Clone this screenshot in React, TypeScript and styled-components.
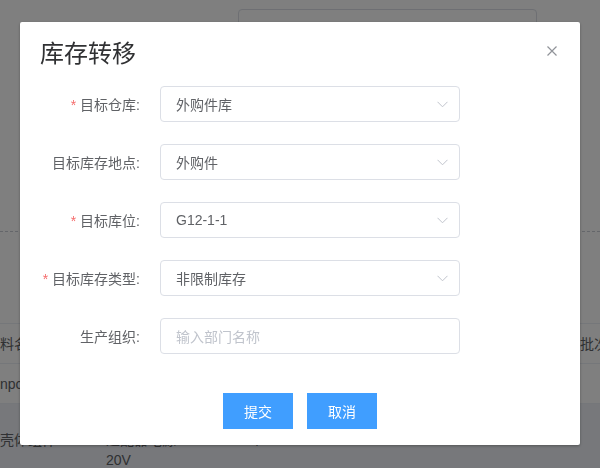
import styled, { createGlobalStyle } from 'styled-components';

const GlobalStyle = createGlobalStyle`
  html, body {
    margin: 0;
    padding: 0;
  }
  body {
    font-family: "Liberation Sans", "Noto Sans CJK SC", sans-serif;
    font-size: 14px;
    color: #606266;
  }
`;

// 背景页面
const Page = styled.div`
  position: relative;
  width: 600px;
  height: 468px;
  overflow: hidden;
  background: #ffffff;
`;

const FilterBar = styled.div`
  height: 232px;
  box-sizing: border-box;
  padding-top: 9px;
  border-bottom: 1px dashed #c8ccd4;
`;

const FilterRow = styled.div`
  display: flex;
  align-items: center;
  gap: 12px;
  padding-left: 170px;
`;

const FilterLabel = styled.label`
  width: 56px;
  text-align: right;
  font-size: 14px;
  color: #606266;
`;

const FilterInput = styled.div`
  width: 299px;
  height: 40px;
  box-sizing: border-box;
  border: 1px solid #dcdfe6;
  border-radius: 4px;
  padding-left: 15px;
  display: flex;
  align-items: center;
  color: #c0c4cc;
`;

const Table = styled.div`
  margin-top: 91px;
  border-top: 1px solid #ebeef5;
`;

const TableRow = styled.div<{ $tall?: boolean; $shade?: boolean }>`
  display: grid;
  grid-template-columns: 100px 150px 110px 110px 110px 1fr;
  height: ${p => (p.$tall ? 'auto' : '39px')};
  padding: ${p => (p.$tall ? '26px 0 0' : '0')};
  align-items: ${p => (p.$tall ? 'start' : 'center')};
  border-bottom: 1px solid #ebeef5;
  background: ${p => (p.$shade ? '#eef1f6' : '#ffffff')};
  color: #606266;
`;

const Cell = styled.div<{ $pad?: number }>`
  padding-left: ${p => p.$pad ?? 0}px;
  line-height: 20px;
  white-space: nowrap;
`;

// 弹窗
const Overlay = styled.div`
  position: fixed;
  inset: 0;
  background: rgba(0, 0, 0, 0.5);
  display: flex;
  justify-content: center;
  align-items: flex-start;
  padding-top: 22px;
`;

const Dialog = styled.div`
  width: 560px;
  background: #ffffff;
  border-radius: 2px;
  box-shadow: 0 1px 3px rgba(0, 0, 0, 0.3);
  font-family: "Liberation Sans", "Noto Sans CJK SC", sans-serif;
`;

const Header = styled.div`
  display: flex;
  justify-content: space-between;
  align-items: flex-start;
  padding: 20px 20px 0;
`;

const Title = styled.span`
  font-size: 24px;
  line-height: 24px;
  color: #303133;
`;

const CloseButton = styled.button`
  margin: 4px 3px 0 0;
  padding: 0;
  border: none;
  background: none;
  width: 10px;
  height: 10px;
  display: flex;
  cursor: pointer;
`;

const Body = styled.div`
  padding: 20px 20px 39px;
  display: flex;
  flex-direction: column;
  gap: 22px;
`;

const FormItem = styled.div`
  display: grid;
  grid-template-columns: 100px 300px;
  column-gap: 20px;
  align-items: center;
`;

const Label = styled.label`
  text-align: right;
  font-size: 14px;
  color: #606266;
  white-space: nowrap;
`;

const Star = styled.span`
  color: #f56c6c;
  margin-right: 4px;
`;

const Field = styled.div<{ $placeholder?: boolean }>`
  height: 36px;
  box-sizing: border-box;
  border: 1px solid #dcdfe6;
  border-radius: 4px;
  padding: 0 11px 0 15px;
  display: flex;
  align-items: center;
  font-size: 14px;
  color: ${p => (p.$placeholder ? '#c0c4cc' : '#606266')};
`;

const FieldText = styled.span`
  flex: 1;
`;

const Footer = styled.div`
  display: flex;
  justify-content: center;
  gap: 14px;
  padding-bottom: 16px;
`;

const PrimaryButton = styled.button`
  width: 70px;
  height: 36px;
  border: none;
  border-radius: 0;
  background: #409eff;
  color: #ffffff;
  font-family: inherit;
  font-size: 14px;
  cursor: pointer;
`;

const Chevron = () => (
  <svg width="11" height="7" viewBox="0 0 11 7" fill="none">
    <path d="M0.5 0.8 L5.5 5.8 L10.5 0.8" stroke="#c0c4cc" strokeWidth="1" />
  </svg>
);

const CloseIcon = () => (
  <svg width="10" height="10" viewBox="0 0 10 10" fill="none">
    <path d="M0.5 0.5 L9.5 9.5 M9.5 0.5 L0.5 9.5" stroke="#909399" strokeWidth="1.2" />
  </svg>
);

const fields = [
  { label: '目标仓库:', value: '外购件库', required: true, select: true },
  { label: '目标库存地点:', value: '外购件', required: false, select: true },
  { label: '目标库位:', value: 'G12-1-1', required: true, select: true },
  { label: '目标库存类型:', value: '非限制库存', required: true, select: true },
  { label: '生产组织:', value: '输入部门名称', required: false, select: false },
];

const App = () => {
  return (
    <>
      <GlobalStyle />
      <Page>
        <FilterBar>
          <FilterRow>
            <FilterLabel>名称:</FilterLabel>
            <FilterInput>请输入</FilterInput>
          </FilterRow>
        </FilterBar>
        <Table>
          <TableRow>
            <Cell>料名称</Cell>
            <Cell $pad={6}>规格型号</Cell>
            <Cell>单位</Cell>
            <Cell>数量</Cell>
            <Cell>库位</Cell>
            <Cell>批次</Cell>
          </TableRow>
          <TableRow>
            <Cell>npc-001</Cell>
            <Cell $pad={6}></Cell>
            <Cell></Cell>
            <Cell></Cell>
            <Cell></Cell>
            <Cell></Cell>
          </TableRow>
          <TableRow $tall $shade>
            <Cell>壳体组件</Cell>
            <Cell $pad={6}>
              适配器电源 12-
              <br />
              20V
            </Cell>
            <Cell>个</Cell>
            <Cell>10</Cell>
            <Cell>G12-1-1</Cell>
            <Cell></Cell>
          </TableRow>
        </Table>

        <Overlay>
          <Dialog>
            <Header>
              <Title>库存转移</Title>
              <CloseButton aria-label="关闭">
                <CloseIcon />
              </CloseButton>
            </Header>
            <Body>
              {fields.map(f => (
                <FormItem key={f.label}>
                  <Label>
                    {f.required && <Star>*</Star>}
                    {f.label}
                  </Label>
                  <Field $placeholder={!f.select}>
                    <FieldText>{f.value}</FieldText>
                    {f.select && <Chevron />}
                  </Field>
                </FormItem>
              ))}
            </Body>
            <Footer>
              <PrimaryButton>提交</PrimaryButton>
              <PrimaryButton>取消</PrimaryButton>
            </Footer>
          </Dialog>
        </Overlay>
      </Page>
    </>
  );
};

export default App;
